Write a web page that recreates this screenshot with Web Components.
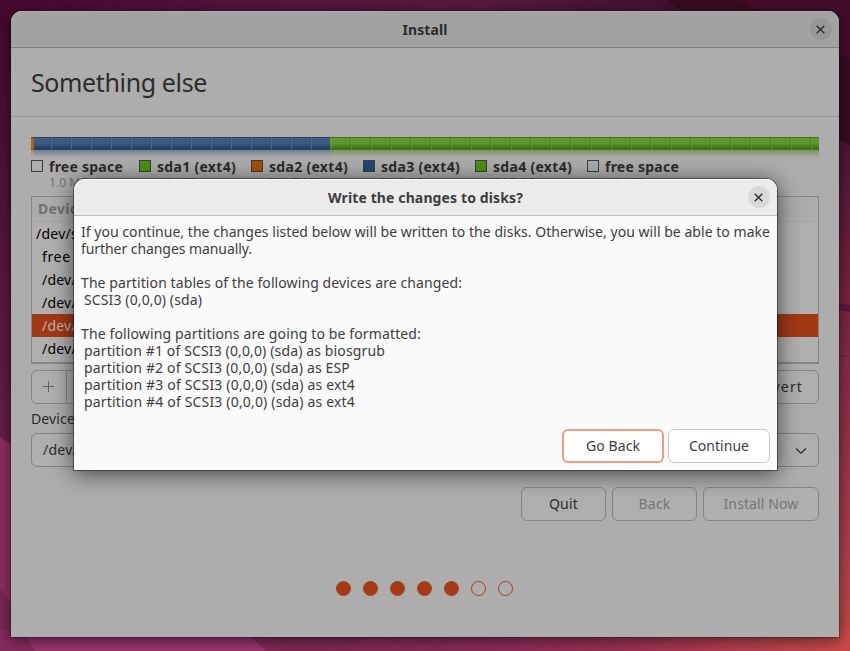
<!DOCTYPE html>
<html lang="en">
<head>
<meta charset="utf-8">
<title>Install</title>
<style>
html,body{margin:0;width:850px;height:651px;overflow:hidden}
body{font-family:"Noto Sans","Open Sans",sans-serif;font-size:14px;color:#2c2c2c}
</style>
</head>
<body>
<install-desktop></install-desktop>
<script>
const define = (name, html, setup) => customElements.define(name, class extends HTMLElement {
  connectedCallback() {
    if (this.shadowRoot) return;
    const root = this.attachShadow({mode: 'open'});
    root.innerHTML = typeof html === 'function' ? html(this) : html;
    if (setup) setup(this, root);
  }
});

/* A single line of text tracked to an exact advance width. */
define('fit-text', '<style>:host{display:inline-block;white-space:pre}span{white-space:pre}</style><span><slot></slot></span>', el => {
  const w = +el.getAttribute('w');
  if (!w) return;
  const n = el.textContent.length;
  const natural = el.shadowRoot.querySelector('span').getBoundingClientRect().width;
  el.style.letterSpacing = ((w - natural) / n).toFixed(4) + 'px';
});

define('wall-paper', `<style>:host{display:block;width:850px;height:651px}svg{display:block}</style>
<svg width="850" height="651" viewBox="0 0 850 651">
<defs>
<linearGradient id="l" x1="0" y1="0" x2="0" y2="1"><stop offset="0" stop-color="#45092f"/><stop offset=".35" stop-color="#511539"/><stop offset=".68" stop-color="#651f43"/><stop offset="1" stop-color="#762850"/></linearGradient>
<linearGradient id="t" x1="0" y1="0" x2="1" y2="0"><stop offset="0" stop-color="#45092f"/><stop offset=".3" stop-color="#511539"/><stop offset=".55" stop-color="#561a3d"/><stop offset=".8" stop-color="#42102f"/></linearGradient>
<linearGradient id="r" x1="0" y1="0" x2="0" y2="1"><stop offset=".0" stop-color="#48152f"/><stop offset=".35" stop-color="#7b2545"/><stop offset=".65" stop-color="#9b354b"/><stop offset="1" stop-color="#c44945"/></linearGradient>
<linearGradient id="b" x1="0" y1="0" x2="1" y2="0"><stop offset="0" stop-color="#822c5b"/><stop offset=".4" stop-color="#7e2852"/><stop offset=".55" stop-color="#862b55"/><stop offset=".72" stop-color="#963053"/><stop offset="1" stop-color="#c64a45"/></linearGradient>
</defs>
<rect width="850" height="651" fill="url(#l)"/>
<rect width="850" height="30" fill="url(#t)"/>
<path d="M668 0H850V147L836 138L690 18Z" fill="#380b20"/>
<path d="M740 0H850V60Z" fill="#430d27"/>
<path d="M836 137L850 146V651H836Z" fill="url(#r)"/>
<path d="M836 303L850 305V312L836 310Z" fill="#5d183b"/>
<path d="M836 356L849 355L836 358Z" fill="#681b3e"/>
<path d="M0 437L20 450V620H0Z" fill="#8c2d62"/>
<path d="M0 588L20 615V651H0Z" fill="#782851"/>
<rect y="630" width="850" height="21" fill="url(#b)"/>
<path d="M22 630H241L267 651H35Z" fill="#97336d"/>
</svg>`);

define('close-button', `<style>:host{display:grid;place-items:center;width:22px;height:22px;border-radius:50%;background:var(--bg);margin-left:.5px}</style>
<svg width="9" height="9" viewBox="0 0 9 9"><path d="M.7.7 8.3 8.3M8.3.7.7 8.3" stroke="#2b2b2b" stroke-width="1.35"/></svg>`);

define('title-bar', `<style>:host{display:grid;grid-template-columns:30px 1fr 30px;align-items:center;height:36px;box-sizing:content-box;border-bottom:1px solid var(--line);background:var(--bar);box-shadow:inset 0 1px var(--hi);font-weight:700}
.t{grid-column:2;text-align:center}close-button{--bg:var(--close)}</style><div class="t"><slot></slot></div><close-button></close-button>`);

define('push-button', `<style>:host{display:flex;align-items:center;justify-content:center;box-sizing:border-box;height:34px;padding-bottom:2px;border:1px solid var(--edge,#858585);border-radius:6px;background:var(--face,#afafaf)}
:host([disabled]){color:#757575}:host([focus]){border:2px solid #eb9e83}</style><slot></slot>`);

define('usage-bar', `<style>:host{display:block;height:21px}
.bar,.ref{display:flex}.bar{height:13px}.ref{height:8px;opacity:.5;-webkit-mask:linear-gradient(#000,transparent);mask:linear-gradient(#000,transparent)}
i{display:block;box-sizing:border-box}
.bar i{border-top:1px solid;border-bottom:1px solid}
.o{width:3px;background:#ae6420;border-color:#854411 #5c2b06!important}
.b{width:296px;background:repeating-linear-gradient(90deg,transparent 0 16px,#263d5c55 16px 17px,#6580a077 17px 18px,transparent 18px 20px),linear-gradient(#405e87,#3c5a80 50%,#213c60);border-color:#294363 #132744!important}
.g{flex:1;background:repeating-linear-gradient(90deg,#76a84b77 0 1px,transparent 1px 20px,#3f731766 20px 21px,#76a84b77 21px 21px) 0 0/21px,linear-gradient(#629c30,#5b962b 50%,#386d12);border-color:#42751b #244d05!important}
.bar .g{background:repeating-linear-gradient(90deg,#76a84b77 0 1px,transparent 1px 19px,#3f731777 19px 20px) 1px 0,linear-gradient(#629c30,#5b962b 50%,#386d12)}
.ref .b{background:#344e70}.ref .g{background:#477a20}
</style><div class="bar"><i class="o"></i><i class="b"></i><i class="g"></i></div><div class="ref"><i class="o"></i><i class="b"></i><i class="g"></i></div>`);

define('legend-item', el => `<style>:host{display:grid;grid-template-columns:12px auto;column-gap:6px;align-content:start;width:112px;white-space:nowrap}
i{width:10px;height:10px;border:1px solid #3e3e3e;background:${el.getAttribute('color') || 'transparent'};margin-top:2px}
b{line-height:17px}small{grid-column:2;font-size:12px;line-height:16px;color:#737373}</style>
<i></i><b><slot></slot></b><small><fit-text w="${el.getAttribute('sw')}">${el.getAttribute('size')}</fit-text></small>`);

define('device-table', `<style>:host{display:block;box-sizing:border-box;height:168px;border:1px solid #868686;border-bottom-width:2px;background:#afafaf;color:#000}
div{height:23px;line-height:23px;padding-left:10px}
.h{height:24px;line-height:24px;padding-left:6px;font-weight:700;color:#707070;background:#acacac;border-bottom:1px solid #a6a6a6}
.r{padding-left:4px}.s{background:#a23915;color:#c0b4ae}</style>
<div class="h"><fit-text w="48">Device</fit-text></div>
<div class="r"><fit-text w="59">/dev/sda</fit-text></div><div><fit-text w="74">free space</fit-text></div>
<div><fit-text w="67">/dev/sda1</fit-text></div><div><fit-text w="67">/dev/sda2</fit-text></div>
<div class="s"><fit-text w="67">/dev/sda3</fit-text></div><div><fit-text w="67">/dev/sda4</fit-text></div>`);

define('page-dots', `<style>:host{display:flex;justify-content:center;gap:12px}i{box-sizing:border-box;width:15px;height:15px;border:1.2px solid #a63f1c;border-radius:50%}.f{background:#a53b16}</style>
${'<i class="f"></i>'.repeat(5)}<i></i><i></i>`);

define('install-window', `<style>
:host{display:flex;flex-direction:column;box-sizing:border-box;width:828px;height:626px;border-radius:11px 11px 0 0;overflow:hidden;background:#adadad;box-shadow:0 0 0 1px #0003,0 3px 14px #0008;--bar:#a2a2a2;--line:#7e7e7e;--hi:#aeaeae;--close:#979797}
h1{margin:0;height:68px;line-height:69px;padding-left:20px;border-bottom:1px solid #999;font-size:25px;font-weight:400}
main{display:flex;flex-direction:column;padding:20px 20px 0}
.legend{display:flex;height:38px}.legend :first-child{width:108px}
.tools{display:flex;justify-content:space-between;margin-top:6px}
.add{display:flex;width:72px}.add push-button{width:36px;border-radius:6px 0 0 6px}.add push-button+push-button{border-radius:0 6px 6px 0;border-left:0}
.label{height:29px;line-height:29px}
.combo{display:flex;align-items:center;justify-content:space-between;box-sizing:border-box;height:34px;border:1px solid #858585;border-radius:6px;padding:0 11px 1px 11px;background:#afafaf}
.combo svg{margin-top:2px}
.nav{display:flex;gap:6px;justify-content:flex-end;margin-top:20px}
page-dots{margin-top:60px;margin-right:1px}
</style>
<title-bar><fit-text w="45">Install</fit-text></title-bar>
<h1><fit-text w="176">Something else</fit-text></h1>
<main><usage-bar></usage-bar>
<div class="legend">
<legend-item size="1.0 MB" sw="39"><fit-text w="74">free space</fit-text></legend-item>
<legend-item color="#4c930c" size="1.0 MB" sw="39"><fit-text w="79">sda1 (ext4)</fit-text></legend-item>
<legend-item color="#a65006" size="511.7 MB" sw="52"><fit-text w="79">sda2 (ext4)</fit-text></legend-item>
<legend-item color="#24457a" size="51.2 GB" sw="43"><fit-text w="79">sda3 (ext4)</fit-text></legend-item>
<legend-item color="#4c930c" size="84.7 GB" sw="43"><fit-text w="79">sda4 (ext4)</fit-text></legend-item>
<legend-item size="1.0 MB" sw="39"><fit-text w="74">free space</fit-text></legend-item>
</div>
<device-table></device-table>
<div class="tools"><div class="add"><push-button><svg width="11" height="11" style="margin-right:1px"><path d="M5.5 0V11M0 5.5H11" stroke="#666"/></svg></push-button><push-button></push-button></div>
<push-button style="width:81px"><fit-text w="49">Revert</fit-text></push-button></div>
<div class="label"><fit-text w="44">Device</fit-text></div>
<div class="combo"><fit-text w="59">/dev/sda</fit-text><svg width="12" height="8"><path d="M1 1.5 6 6.2 11 1.5" fill="none" stroke="#2c2c2c" stroke-width="1.3"/></svg></div>
<div class="nav"><push-button style="width:85px"><fit-text w="29">Quit</fit-text></push-button><push-button disabled style="width:85px"><fit-text w="32">Back</fit-text></push-button><push-button disabled style="width:116px"><fit-text w="75">Install Now</fit-text></push-button></div>
<page-dots></page-dots></main>`);

define('confirm-dialog', `<style>
:host{display:flex;flex-direction:column;box-sizing:border-box;width:703px;height:291px;border-radius:11px 11px 0 0;overflow:hidden;background:#fafafa;color:#3d3d3d;box-shadow:0 0 0 1px #0006,0 3px 22px 1px #0009;--bar:#ebebeb;--line:#bfbfbf;--hi:#fff;--close:#d9d9d9}
.msg{flex:1;padding:7px 7px 0}.msg div{height:17px;line-height:17px;white-space:nowrap}.msg .i{padding-left:3px}
.act{display:flex;justify-content:flex-end;gap:4px;padding:0 7px 7px}push-button{width:102px;--edge:#c6c6c6;--face:#fff}
</style>
<title-bar><fit-text w="195">Write the changes to disks?</fit-text></title-bar>
<div class="msg">
<div><fit-text w="689">If you continue, the changes listed below will be written to the disks. Otherwise, you will be able to make</fit-text></div>
<div><fit-text w="171">further changes manually.</fit-text></div><div></div>
<div><fit-text w="381">The partition tables of the following devices are changed:</fit-text></div>
<div class="i"><fit-text w="118">SCSI3 (0,0,0) (sda)</fit-text></div><div></div>
<div><fit-text w="340">The following partitions are going to be formatted:</fit-text></div>
<div class="i"><fit-text w="301">partition #1 of SCSI3 (0,0,0) (sda) as biosgrub</fit-text></div>
<div class="i"><fit-text w="266">partition #2 of SCSI3 (0,0,0) (sda) as ESP</fit-text></div>
<div class="i"><fit-text w="271">partition #3 of SCSI3 (0,0,0) (sda) as ext4</fit-text></div>
<div class="i"><fit-text w="271">partition #4 of SCSI3 (0,0,0) (sda) as ext4</fit-text></div>
</div>
<div class="act"><push-button focus><fit-text w="54">Go Back</fit-text></push-button><push-button><fit-text w="60">Continue</fit-text></push-button></div>`);

define('install-desktop', `<style>:host{display:block;position:relative;width:850px;height:651px;overflow:hidden}
install-window{position:absolute;left:11px;top:11px}confirm-dialog{position:absolute;left:74px;top:179px}</style>
<wall-paper></wall-paper><install-window></install-window><confirm-dialog></confirm-dialog>`);
</script>
</body>
</html>
